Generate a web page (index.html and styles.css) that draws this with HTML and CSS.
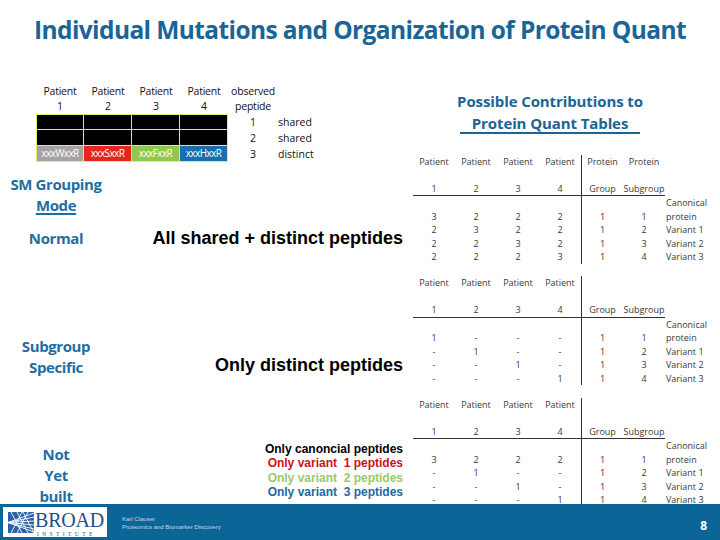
FILE: index.html
```html
<!DOCTYPE html>
<html>
<head>
<meta charset="utf-8">
<link rel="stylesheet" href="styles.css">
</head>
<body>
<div class="slide">
  <h1 class="title">Individual Mutations and Organization of Protein Quant</h1>
  <div class="content">
    <div class="left">
      <div class="diagram">
        <div class="dh">Patient<br>1</div>
        <div class="dh">Patient<br>2</div>
        <div class="dh">Patient<br>3</div>
        <div class="dh">Patient<br>4</div>
        <div class="dh">observed<br>peptide</div>
        <div class="dh"></div>

        <div class="cell first top"></div>
        <div class="cell top"></div>
        <div class="cell top"></div>
        <div class="cell top"></div>
        <div class="num">1</div>
        <div class="kind">shared</div>

        <div class="cell first"></div>
        <div class="cell"></div>
        <div class="cell"></div>
        <div class="cell"></div>
        <div class="num">2</div>
        <div class="kind">shared</div>

        <div class="cell first c-gray">xxxWxxR</div>
        <div class="cell c-red">xxxSxxR</div>
        <div class="cell c-green">xxxFxxR</div>
        <div class="cell c-blue">xxxHxxR</div>
        <div class="num">3</div>
        <div class="kind">distinct</div>
      </div>

      <div class="mode mode-normal">
        <div class="mode-head">SM Grouping<br><span class="u">Mode</span></div>
        <div class="mode-row">
          <div class="mode-label">Normal</div>
          <div class="mode-text">All shared + distinct peptides</div>
        </div>
      </div>

      <div class="mode mode-sub">
        <div class="mode-row bottom">
          <div class="mode-label">Subgroup<br>Specific</div>
          <div class="mode-text">Only distinct peptides</div>
        </div>
      </div>

      <div class="mode mode-nyb">
        <div class="mode-row">
          <div class="mode-label">Not<br>Yet<br>built</div>
          <div class="mode-list">
            <div class="k-black">Only canoncial peptides</div>
            <div class="k-red">Only variant&nbsp; 1 peptides</div>
            <div class="k-green">Only variant&nbsp; 2 peptides</div>
            <div class="k-blue">Only variant&nbsp; 3 peptides</div>
          </div>
        </div>
      </div>
    </div>

    <div class="right">
      <div class="heading">
        <div>Possible Contributions to</div>
        <div><span class="uline">Protein Quant Tables</span></div>
      </div>

      <div class="qtable">
        <div class="col"><div class="qh">Patient<br><br>1</div><div class="qb"><br>3<br>2<br>2<br>2</div></div>
        <div class="col"><div class="qh">Patient<br><br>2</div><div class="qb"><br>2<br>3<br>2<br>2</div></div>
        <div class="col"><div class="qh">Patient<br><br>3</div><div class="qb"><br>2<br>2<br>3<br>2</div></div>
        <div class="col"><div class="qh">Patient<br><br>4</div><div class="qb"><br>2<br>2<br>2<br>3</div></div>
        <div class="col split"><div class="qh">Protein<br><br>Group</div><div class="qb"><br>1<br>1<br>1<br>1</div></div>
        <div class="col"><div class="qh">Protein<br><br>Subgroup</div><div class="qb"><br>1<br>2<br>3<br>4</div></div>
        <div class="col lab"><div class="qh nl"><br><br>&nbsp;</div><div class="qb">Canonical<br>protein<br>Variant 1<br>Variant 2<br>Variant 3</div></div>
      </div>

      <div class="qtable">
        <div class="col"><div class="qh">Patient<br><br>1</div><div class="qb"><br>1<br>-<br>-<br>-</div></div>
        <div class="col"><div class="qh">Patient<br><br>2</div><div class="qb"><br>-<br>1<br>-<br>-</div></div>
        <div class="col"><div class="qh">Patient<br><br>3</div><div class="qb"><br>-<br>-<br>1<br>-</div></div>
        <div class="col"><div class="qh">Patient<br><br>4</div><div class="qb"><br>-<br>-<br>-<br>1</div></div>
        <div class="col split"><div class="qh"><br><br>Group</div><div class="qb"><br>1<br>1<br>1<br>1</div></div>
        <div class="col"><div class="qh"><br><br>Subgroup</div><div class="qb"><br>1<br>2<br>3<br>4</div></div>
        <div class="col lab"><div class="qh nl"><br><br>&nbsp;</div><div class="qb">Canonical<br>protein<br>Variant 1<br>Variant 2<br>Variant 3</div></div>
      </div>

      <div class="qtable">
        <div class="col"><div class="qh">Patient<br><br>1</div><div class="qb"><br>3<br>-<br>-<br>-</div></div>
        <div class="col"><div class="qh">Patient<br><br>2</div><div class="qb"><br>2<br>1<br>-<br>-</div></div>
        <div class="col"><div class="qh">Patient<br><br>3</div><div class="qb"><br>2<br>-<br>1<br>-</div></div>
        <div class="col"><div class="qh">Patient<br><br>4</div><div class="qb"><br>2<br>-<br>-<br>1</div></div>
        <div class="col split"><div class="qh"><br><br>Group</div><div class="qb"><br>1<br>1<br>1<br>1</div></div>
        <div class="col"><div class="qh"><br><br>Subgroup</div><div class="qb"><br>1<br>2<br>3<br>4</div></div>
        <div class="col lab"><div class="qh nl"><br><br>&nbsp;</div><div class="qb">Canonical<br>protein<br>Variant 1<br>Variant 2<br>Variant 3</div></div>
      </div>
    </div>
  </div>

  <footer class="footer">
    <div class="logo">
      <svg class="logo-mark" width="26" height="21" viewBox="0 0 26 21">
        <rect width="26" height="21" fill="#2c62a6"/>
        <g stroke="#ffffff" stroke-width="0.9" fill="none">
          <path d="M0 10.5 L26 1"/>
          <path d="M0 10.5 L26 5"/>
          <path d="M0 10.5 L26 9"/>
          <path d="M0 10.5 L26 13"/>
          <path d="M0 10.5 L26 17"/>
          <path d="M0 10.5 L26 20"/>
          <path d="M3 0 L14 21"/>
          <path d="M9 0 L20 21"/>
          <path d="M15 0 L26 21"/>
          <path d="M3 21 L14 0"/>
          <path d="M9 21 L20 0"/>
        </g>
      </svg>
      <div class="logo-words">
        <div class="broad">BROAD</div>
        <div class="inst">INSTITUTE</div>
      </div>
    </div>
    <div class="credit">Karl Clauser<br>Proteomics and Biomarker Discovery</div>
    <div class="pageno">8</div>
  </footer>
</div>
</body>
</html>
```
FILE: styles.css
```css
* { box-sizing: border-box; }
html, body { margin: 0; padding: 0; background: #ffffff; }
.slide {
  width: 720px;
  height: 540px;
  display: flex;
  flex-direction: column;
  overflow: hidden;
  font-family: "Open Sans", "Liberation Sans", sans-serif;
}
.title {
  margin: 0;
  height: 60px;
  line-height: 60px;
  text-align: center;
  font-size: 24.5px;
  font-weight: 700;
  letter-spacing: -0.6px;
  color: #1a6496;
}
.content {
  height: 444px;
  display: grid;
  grid-template-columns: 410px 310px;
}
/* ---------- left ---------- */
.left { display: flex; flex-direction: column; }
.diagram {
  margin-top: 24px;
  margin-left: 36px;
  display: grid;
  grid-template-columns: repeat(4, 48px) 50px auto;
  grid-template-rows: 30px repeat(3, 16px);
  font-size: 10.5px;
  color: #111;
}
.dh { text-align: center; line-height: 15px; letter-spacing: -0.2px; }
.cell {
  background: #000;
  border-right: 1px solid #e8e86a;
  border-bottom: 1px solid #e8e86a;
  color: #fff;
  font-size: 10px;
  line-height: 15px;
  text-align: center;
  letter-spacing: -0.6px;
  overflow: hidden;
  white-space: nowrap;
}
.cell.first { border-left: 1px solid #e8e86a; }
.cell.top { border-top: 1px solid #e8e86a; }
.c-gray { background: #a3a3a3; }
.c-red { background: #e4261c; }
.c-green { background: #93c64c; }
.c-blue { background: #176fae; }
.num, .kind { line-height: 16px; font-size: 10.5px; }
.num { text-align: center; }

.mode { display: flex; flex-direction: column; }
.mode-head, .mode-label {
  width: 112px;
  text-align: center;
  font-size: 15px;
  font-weight: 700;
  line-height: 21px;
  color: #1f6ea3;
  letter-spacing: -0.4px;
}
.u { text-decoration: underline; text-decoration-thickness: 1.5px; text-underline-offset: 2px; }
.mode-row { display: flex; align-items: center; }
.mode-row.bottom { align-items: flex-end; }
.mode-text {
  flex: 1;
  text-align: right;
  padding-right: 7px;
  font-family: "Liberation Sans", Arial, sans-serif;
  font-weight: 700;
  font-size: 18px;
  line-height: 21px;
  color: #000;
}
.mode-normal { margin-top: 12px; }
.mode-normal .mode-row { margin-top: 12px; }
.mode-sub { margin-top: 87px; }
.mode-sub .mode-text { padding-bottom: 2px; }
.mode-nyb { margin-top: 66px; }
.mode-nyb .mode-row { align-items: flex-start; }
.mode-list {
  flex: 1;
  margin-top: -2px;
  text-align: right;
  padding-right: 7px;
  font-family: "Liberation Sans", Arial, sans-serif;
  font-weight: 700;
  font-size: 12px;
  line-height: 14.3px;
}
.k-black { color: #000; }
.k-red { color: #c8141e; }
.k-green { color: #9bc96c; }
.k-blue { color: #1d69a0; }

/* ---------- right ---------- */
.right { display: flex; flex-direction: column; padding-left: 3px; }
.heading {
  margin-top: 30px;
  width: 274px;
  text-align: center;
  font-size: 15px;
  font-weight: 700;
  line-height: 22px;
  color: #1a6496;
  letter-spacing: -0.1px;
}
.uline {
  display: inline-block;
  padding: 0 12px;
  line-height: 17px;
  border-bottom: 2px solid #1a6496;
}
.qtable {
  display: flex;
  font-size: 9px;
  line-height: 13.5px;
  color: #3a3a3a;
  margin-top: 20.5px;
}
.qtable + .qtable { margin-top: 12.5px; }
.col { width: 42px; text-align: center; }
.col.split { border-left: 1px solid #333; }
.col.lab { width: auto; text-align: left; padding-left: 1px; }
.qh { border-bottom: 1px solid #333; }
.qh.nl { border-bottom: 1px solid transparent; }

/* ---------- footer ---------- */
.footer {
  height: 36px;
  background: #0b6597;
  display: flex;
  align-items: center;
}
.logo {
  margin-left: 3px;
  width: 104px;
  height: 30px;
  background: #fff;
  display: flex;
  align-items: flex-start;
  padding: 5px 0 0 5px;
}
.logo-mark { display: block; }
.logo-words { margin-left: 1px; }
.broad {
  font-family: "Liberation Serif", serif;
  font-size: 20px;
  line-height: 17px;
  height: 17px;
  color: #1f4f8c;
  letter-spacing: -0.2px;
}
.inst {
  font-family: "Liberation Serif", serif;
  font-size: 5.5px;
  line-height: 6px;
  margin-top: 2px;
  letter-spacing: 3.4px;
  color: #1f4f8c;
  padding-left: 2px;
}
.credit {
  margin-left: 15px;
  margin-top: 2px;
  font-family: "Liberation Sans", Arial, sans-serif;
  font-size: 6px;
  line-height: 8px;
  color: #c9d5e2;
}
.pageno {
  margin-left: auto;
  margin-right: 13px;
  margin-top: 6px;
  font-size: 12px;
  font-weight: 700;
  color: #fff;
}
```
